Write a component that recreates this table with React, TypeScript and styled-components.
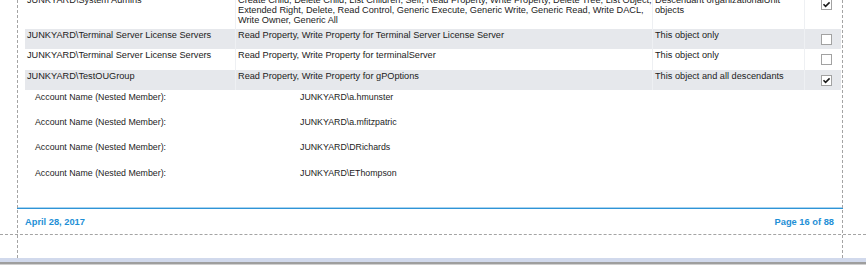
import * as React from "react";
import styled, { createGlobalStyle } from "styled-components";

const GlobalStyle = createGlobalStyle`
  html, body {
    margin: 0;
    padding: 0;
    background: #fff;
    overflow: hidden;
  }
`;

const Viewer = styled.div`
  width: 866px;
  height: 265px;
  display: flex;
  flex-direction: column;
  font-family: "Liberation Sans", Arial, sans-serif;
  color: #222;
`;

const Canvas = styled.div`
  position: relative;
  height: 258px;
  overflow: hidden;
  background: #fff;
`;

const VGuide = styled.div<{ $left: number }>`
  position: absolute;
  top: 0;
  bottom: 0;
  left: ${(p) => p.$left}px;
  border-left: 1px dashed #a4a4a4;
`;

const HGuide = styled.div<{ $top: number }>`
  position: absolute;
  left: 0;
  right: 0;
  top: ${(p) => p.$top}px;
  border-top: 1px dashed #a4a4a4;
`;

const Page = styled.div`
  margin-left: 17px;
  width: 826px;
  height: 234px;
  display: flex;
  flex-direction: column;
`;

const Main = styled.div`
  flex: 1;
  padding-left: 8px;
`;

const Table = styled.div`
  width: 816px;
  margin-top: -6px;
  font-size: 9.2px;
  line-height: 10px;
`;

const Row = styled.div<{ $shaded?: boolean }>`
  display: grid;
  grid-template-columns: 210px 417px 152px 37px;
  min-height: 20.33px;
  background: ${(p) => (p.$shaded ? "#e6e8ec" : "#fff")};
`;

const Cell = styled.div`
  padding: 1px 3px 4px 2px;
  border-left: 1px solid #eef0f3;
  white-space: nowrap;

  &:first-child {
    border-left: none;
  }
`;

const CheckCell = styled(Cell)`
  padding: 5px 0 0 16px;
`;

const Box = styled.div`
  width: 9px;
  height: 9px;
  border: 1px solid #a2a2a2;
  background: #fff;
  display: flex;
  align-items: center;
  justify-content: center;
`;

const MemberList = styled.div`
  padding-left: 10px;
  font-size: 8.8px;
  line-height: 14px;
  color: #1c1c1c;
`;

const MemberRow = styled.div`
  display: grid;
  grid-template-columns: 265px 1fr;
  height: 25.25px;
`;

const Footer = styled.div`
  height: 25px;
  border-top: 1px solid #2f94d6;
  box-shadow: 0 -1px 0 #a8d4f0;
  display: flex;
  align-items: center;
  justify-content: space-between;
  padding: 0 9px 0 8px;
  font-size: 9.3px;
  font-weight: 700;
  color: #1e8fd6;
  margin-top: 1px;
`;

const Strip = styled.div`
  height: 4px;
  background: #d1d9ec;
`;

const Edge = styled.div`
  height: 2px;
  background: #9e9e9e;
  border-bottom: 1px solid #cfcfcf;
`;

interface AclRow {
  account: string;
  rights: string[];
  applies: string[];
  inherited: boolean;
  shaded: boolean;
}

const rows: AclRow[] = [
  {
    account: "JUNKYARD\\System Admins",
    rights: [
      "Create Child, Delete Child, List Children, Self, Read Property, Write Property, Delete Tree, List Object,",
      "Extended Right, Delete, Read Control, Generic Execute, Generic Write, Generic Read, Write DACL,",
      "Write Owner, Generic All",
    ],
    applies: ["Descendant organizationalUnit", "objects"],
    inherited: true,
    shaded: false,
  },
  {
    account: "JUNKYARD\\Terminal Server License Servers",
    rights: ["Read Property, Write Property for Terminal Server License Server"],
    applies: ["This object only"],
    inherited: false,
    shaded: true,
  },
  {
    account: "JUNKYARD\\Terminal Server License Servers",
    rights: ["Read Property, Write Property for terminalServer"],
    applies: ["This object only"],
    inherited: false,
    shaded: false,
  },
  {
    account: "JUNKYARD\\TestOUGroup",
    rights: ["Read Property, Write Property for gPOptions"],
    applies: ["This object and all descendants"],
    inherited: true,
    shaded: true,
  },
];

const members = [
  "JUNKYARD\\a.hmunster",
  "JUNKYARD\\a.mfitzpatric",
  "JUNKYARD\\DRichards",
  "JUNKYARD\\EThompson",
];

const CheckBox = ({ checked }: { checked: boolean }) => (
  <Box>
    {checked && (
      <svg width="9" height="9" viewBox="0 0 9 9">
        <path d="M1.5 4.2 L3.6 6.3 L7.6 2.4" fill="none" stroke="#1a1a1a" strokeWidth="1.6" />
      </svg>
    )}
  </Box>
);

export default function App() {
  return (
    <>
      <GlobalStyle />
      <Viewer>
        <Canvas>
          <Page>
            <Main>
              <Table>
                {rows.map((r, i) => (
                  <Row key={i} $shaded={r.shaded}>
                    <Cell>{r.account}</Cell>
                    <Cell>
                      {r.rights.map((l, j) => (
                        <div key={j}>{l}</div>
                      ))}
                    </Cell>
                    <Cell>
                      {r.applies.map((l, j) => (
                        <div key={j}>{l}</div>
                      ))}
                    </Cell>
                    <CheckCell>
                      <CheckBox checked={r.inherited} />
                    </CheckCell>
                  </Row>
                ))}
              </Table>
              <MemberList>
                {members.map((m) => (
                  <MemberRow key={m}>
                    <span>Account Name (Nested Member):</span>
                    <span>{m}</span>
                  </MemberRow>
                ))}
              </MemberList>
            </Main>
            <Footer>
              <span>April 28, 2017</span>
              <span>Page 16 of 88</span>
            </Footer>
          </Page>
          <VGuide $left={17} />
          <VGuide $left={842} />
          <HGuide $top={234} />
        </Canvas>
        <Strip />
        <Edge />
      </Viewer>
    </>
  );
}
